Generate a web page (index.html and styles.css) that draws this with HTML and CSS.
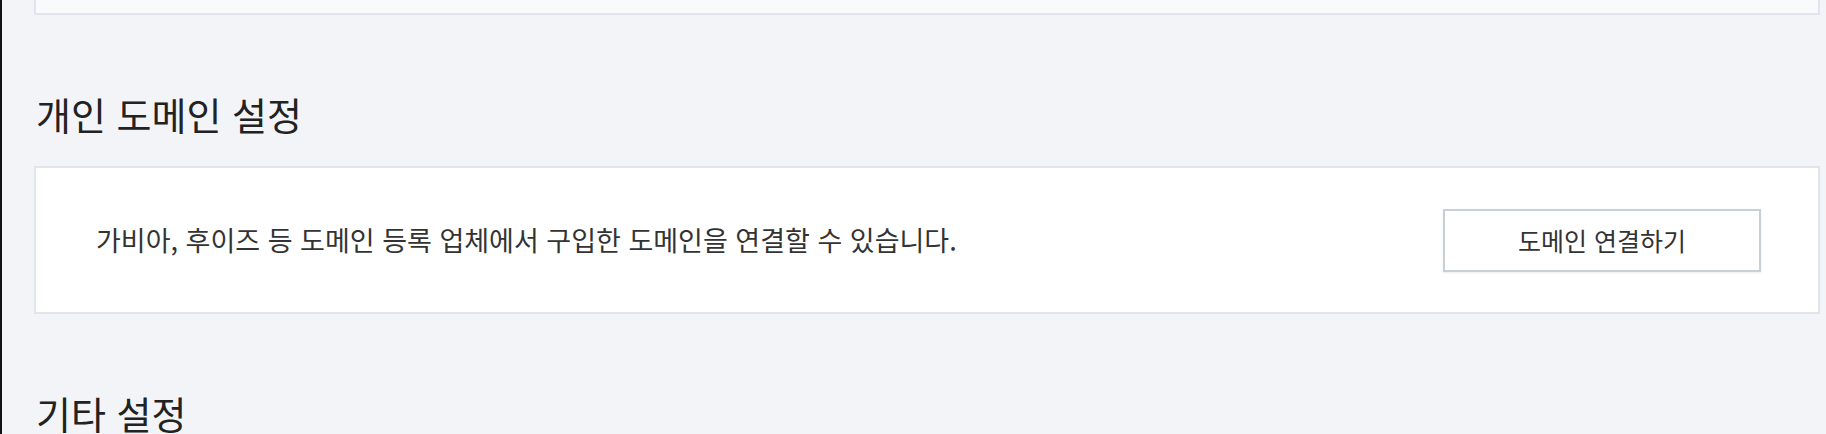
FILE: index.html
```html
<!DOCTYPE html>
<html lang="ko">
<head>
<meta charset="utf-8">
<link rel="stylesheet" href="styles.css">
</head>
<body>
<div class="frame">
  <main class="content">
    <div class="card card-prev"></div>
    <section class="section">
      <h2 class="section-title">개인 도메인 설정</h2>
      <div class="card card-row">
        <p class="desc">가비아, 후이즈 등 도메인 등록 업체에서 구입한 도메인을 연결할 수 있습니다.</p>
        <button class="btn" type="button">도메인 연결하기</button>
      </div>
    </section>
    <section class="section">
      <h2 class="section-title">기타 설정</h2>
    </section>
  </main>
</div>
</body>
</html>
```
FILE: styles.css
```css
html, body {
  margin: 0;
  padding: 0;
  height: 100%;
  overflow: hidden;
}
body {
  background: #f3f4f7;
  font-family: "Noto Sans CJK KR", "Noto Sans", sans-serif;
  color: #333;
}
.frame {
  display: flex;
  height: 100%;
  border-left: 2px solid #111;
}
.content {
  flex: 1;
  padding: 0 6px 0 32px;
}
.card {
  background: #fff;
  border: 2px solid #e0e4ec;
  box-sizing: border-box;
}
.card-prev {
  height: 15px;
  border-top: none;
  background: #f9fafc;
}
.section {
  display: flex;
  flex-direction: column;
}
.section-title {
  margin: 76px 0 29px 2px;
  font-size: 38px;
  line-height: 46px;
  font-weight: 400;
  color: #222;
}
.card-row {
  height: 148px;
  display: flex;
  align-items: center;
  justify-content: space-between;
  padding: 0 57px 0 60px;
}
.desc {
  margin: 0;
  font-size: 27px;
  line-height: 36px;
  color: #333;
}
.btn {
  width: 318px;
  height: 63px;
  background: #fff;
  border: 2px solid #c9cfd9;
  box-shadow: 0 1px 2px rgba(0,0,0,0.08);
  font-family: inherit;
  font-size: 25px;
  color: #333;
  cursor: pointer;
}
```
